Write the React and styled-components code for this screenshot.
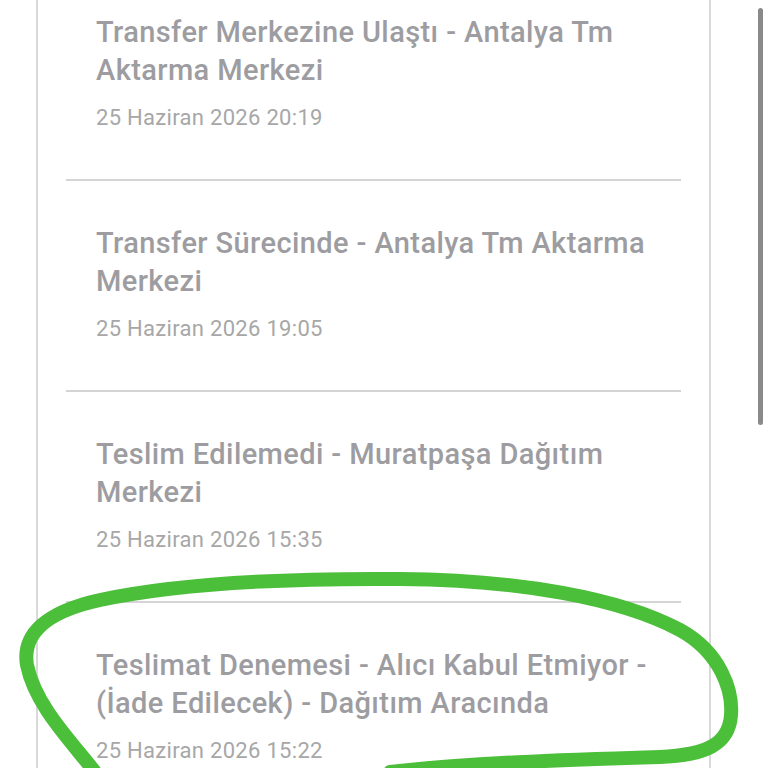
import React from 'react';
import styled, { createGlobalStyle } from 'styled-components';

const events = [
  { title: 'Transfer Merkezine Ulaştı - Antalya Tm Aktarma Merkezi', date: '25 Haziran 2026 20:19' },
  { title: 'Transfer Sürecinde - Antalya Tm Aktarma Merkezi', date: '25 Haziran 2026 19:05' },
  { title: 'Teslim Edilemedi - Muratpaşa Dağıtım Merkezi', date: '25 Haziran 2026 15:35' },
  { title: 'Teslimat Denemesi - Alıcı Kabul Etmiyor - (İade Edilecek) - Dağıtım Aracında', date: '25 Haziran 2026 15:22' },
];

const GlobalStyle = createGlobalStyle`
  html, body {
    margin: 0;
    padding: 0;
    height: 100%;
    overflow: hidden;
    background: #ffffff;
  }
  body {
    font-family: Roboto, "Liberation Sans", sans-serif;
  }
`;

const Screen = styled.div`
  position: relative;
  width: 768px;
  height: 768px;
  overflow: hidden;
  background: #ffffff;
`;

const Card = styled.div`
  box-sizing: border-box;
  margin-left: 36px;
  width: 675px;
  min-height: 768px;
  border-left: 2px solid #d9d9d9;
  border-right: 2px solid #d9d9d9;
  padding: 0 28px;
`;

const Item = styled.div`
  padding: 43px 20px 47px 30px;
  border-bottom: 2px solid #d4d4d4;

  &:first-child {
    padding-top: 13px;
  }
`;

const Title = styled.div`
  font-size: 29px;
  font-weight: 500;
  line-height: 38px;
  letter-spacing: 0.4px;
  color: #9d9da1;
`;

const Stamp = styled.div`
  margin-top: 15px;
  font-size: 22px;
  font-weight: 400;
  line-height: 28px;
  letter-spacing: 0.3px;
  color: #a7a7a7;
`;

const ScrollThumb = styled.div`
  position: absolute;
  top: 8px;
  right: 5px;
  width: 5px;
  height: 417px;
  border-radius: 3px;
  background: #8a8a8a;
`;

const Scribble = styled.svg`
  position: absolute;
  inset: 0;
  pointer-events: none;
`;

export default function App() {
  return (
    <Screen>
      <GlobalStyle />
      <Card>
        {events.map((e, i) => (
          <Item key={i}>
            <Title>{e.title}</Title>
            <Stamp>{e.date}</Stamp>
          </Item>
        ))}
      </Card>
      <ScrollThumb />
      <Scribble width="768" height="768" viewBox="0 0 768 768">
        <path
          d="M 95 772 C 70 740, 35 705, 27 665 C 22 635, 45 612, 100 600 C 180 583, 280 578, 400 579 C 520 580, 620 598, 680 630 C 720 652, 733 690, 731 715 C 729 745, 705 755, 660 757 C 560 760, 470 763, 390 772"
          fill="none"
          stroke="#4cbf3a"
          strokeWidth="14"
          strokeLinecap="round"
          strokeLinejoin="round"
        />
      </Scribble>
    </Screen>
  );
}
